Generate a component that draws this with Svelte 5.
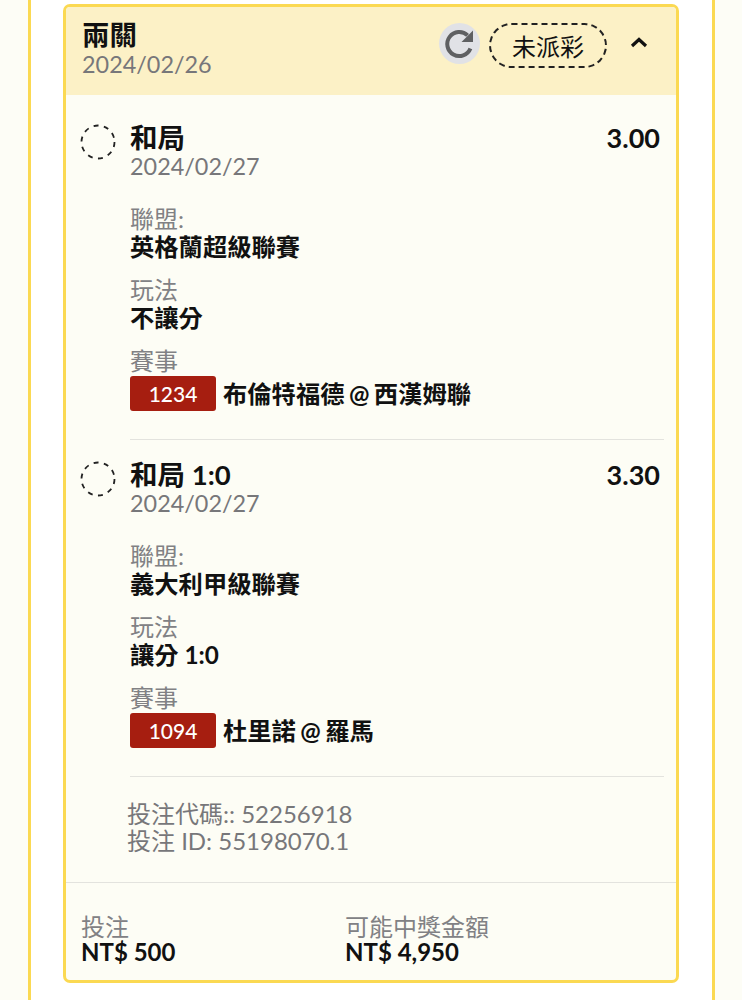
<script>
  const legs = [
    { pick: '和局', date: '2024/02/27', odds: '3.00', league: '英格蘭超級聯賽', play: '不讓分', id: '1234', match: '布倫特福德 @ 西漢姆聯' },
    { pick: '和局 1:0', date: '2024/02/27', odds: '3.30', league: '義大利甲級聯賽', play: '讓分 1:0', id: '1094', match: '杜里諾 @ 羅馬' }
  ];
</script>

<div class="page">
  <div class="panel">
    <div class="card">
      <header class="head">
        <div class="head-text">
          <div class="title">兩關</div>
          <div class="date head-date">2024/02/26</div>
        </div>
        <div class="head-actions">
          <span class="refresh">
            <svg width="34" height="34" viewBox="0 0 34 34" fill="none">
              <path d="M27.4 21.5A12 12 0 1 1 24.6 8.4" stroke="#5f6062" stroke-width="4" fill="none"/>
              <path d="M18.5 15H30V3.5Z" fill="#5f6062"/>
            </svg>
          </span>
          <span class="status">未派彩</span>
          <svg class="chev" width="20" height="14" viewBox="0 0 20 14" fill="none">
            <path d="M3 11 10 4.5 17 11" stroke="#111" stroke-width="3.2"/>
          </svg>
        </div>
      </header>

      <div class="legs">
        {#each legs as leg}
          <section class="leg">
            <svg class="ring" width="36" height="36" viewBox="0 0 36 36" fill="none">
              <circle cx="18" cy="18" r="16.5" stroke="#222" stroke-width="1.8" stroke-dasharray="5 5.4"/>
            </svg>
            <div class="leg-body">
              <div class="leg-top">
                <div class="pick">{leg.pick}</div>
                <div class="odds">{leg.odds}</div>
              </div>
              <div class="date pick-date">{leg.date}</div>
              <div class="field first">
                <div class="label">聯盟:</div>
                <div class="value">{leg.league}</div>
              </div>
              <div class="field">
                <div class="label">玩法</div>
                <div class="value">{leg.play}</div>
              </div>
              <div class="field">
                <div class="label">賽事</div>
                <div class="match">
                  <span class="badge">{leg.id}</span>
                  <span class="value tight">{leg.match}</span>
                </div>
              </div>
            </div>
          </section>
        {/each}
      </div>

      <div class="codes">
        <div>投注代碼:: 52256918</div>
        <div>投注 ID: 55198070.1</div>
      </div>

      <footer class="foot">
        <div class="foot-col">
          <div class="label">投注</div>
          <div class="amount">NT$ 500</div>
        </div>
        <div class="foot-col">
          <div class="label">可能中獎金額</div>
          <div class="amount">NT$ 4,950</div>
        </div>
      </footer>
    </div>
  </div>
</div>

<style>
  :global(body) {
    margin: 0;
    background: #fdfdf6;
  }
  .page {
    height: 1000px;
    overflow: hidden;
    padding: 0 27px 0 28px;
    font-family: Lato, "Noto Sans CJK TC", sans-serif;
    color: #111;
  }
  .panel {
    height: 1000px;
    box-sizing: border-box;
    background: #fff;
    border-left: 3px solid #fbd952;
    border-right: 3px solid #fbd952;
    padding: 4px 33px 0 32px;
  }
  .card {
    box-sizing: border-box;
    height: 979px;
    border: 3px solid #fbd952;
    border-radius: 7px;
    background: #fdfdf5;
    display: flex;
    flex-direction: column;
  }
  .head {
    height: 88px;
    box-sizing: border-box;
    background: #fcf1c6;
    border-radius: 4px 4px 0 0;
    padding: 12px 27px 0 16px;
    display: flex;
    justify-content: space-between;
  }
  .title {
    font-size: 27.5px;
    line-height: 32px;
    font-weight: 700;
  }
  .date {
    font-size: 23.4px;
    line-height: 28px;
    color: #77777a;
  }
  .head-date {
    margin-top: -1px;
  }
  .pick-date {
    margin-top: -2px;
  }
  .head-actions {
    display: flex;
    align-items: flex-start;
    margin-top: 4px;
  }
  .refresh {
    width: 41px;
    height: 41px;
    border-radius: 50%;
    background: #e1e2e6;
    display: flex;
    align-items: center;
    justify-content: center;
  }
  .status {
    box-sizing: border-box;
    width: 118px;
    height: 45px;
    margin: 0 0 0 9px;
    border: 2px dashed #222;
    border-radius: 23px;
    display: flex;
    align-items: center;
    justify-content: center;
    font-size: 24px;
    font-weight: 400;
  }
  .chev {
    margin: 12px 0 0 22px;
  }
  .legs {
    padding: 27px 12px 0 14px;
    display: flex;
    flex-direction: column;
  }
  .leg {
    display: flex;
    gap: 14px;
    height: 337px;
  }
  .ring {
    flex: none;
    margin-top: 2px;
  }
  .leg-body {
    flex: 1;
    box-sizing: border-box;
    border-bottom: 1.5px solid #e3e3de;
    height: 318px;
  }
  .leg-top {
    display: flex;
    justify-content: space-between;
  }
  .pick {
    font-size: 27.5px;
    line-height: 32px;
    font-weight: 700;
  }
  .odds {
    font-size: 27px;
    line-height: 32px;
    font-weight: 700;
    margin-right: 4px;
  }
  .field {
    margin-top: 14px;
  }
  .field.first {
    margin-top: 25px;
  }
  .label {
    font-size: 24px;
    line-height: 27px;
    color: #818184;
  }
  .value {
    font-size: 24.3px;
    line-height: 30px;
    font-weight: 700;
  }
  .tight {
    word-spacing: -1.5px;
  }
  .match {
    display: flex;
    align-items: center;
    gap: 7px;
    margin-top: 2px;
  }
  .badge {
    width: 86px;
    height: 35px;
    background: #a61e10;
    border-radius: 3px;
    color: #fff;
    font-size: 21px;
    font-weight: 500;
    display: flex;
    align-items: center;
    justify-content: center;
  }
  .codes {
    padding: 0 0 0 61px;
    margin-top: 4px;
    font-size: 24px;
    line-height: 27px;
    color: #77777a;
  }
  .foot {
    margin-top: 28px;
    border-top: 1.5px solid #e3e3de;
    padding: 31px 15px 0;
    display: flex;
  }
  .foot-col {
    width: 264px;
  }
  .foot .label {
    line-height: 25px;
  }
  .amount {
    font-size: 24px;
    line-height: 26px;
    font-weight: 700;
  }
</style>
